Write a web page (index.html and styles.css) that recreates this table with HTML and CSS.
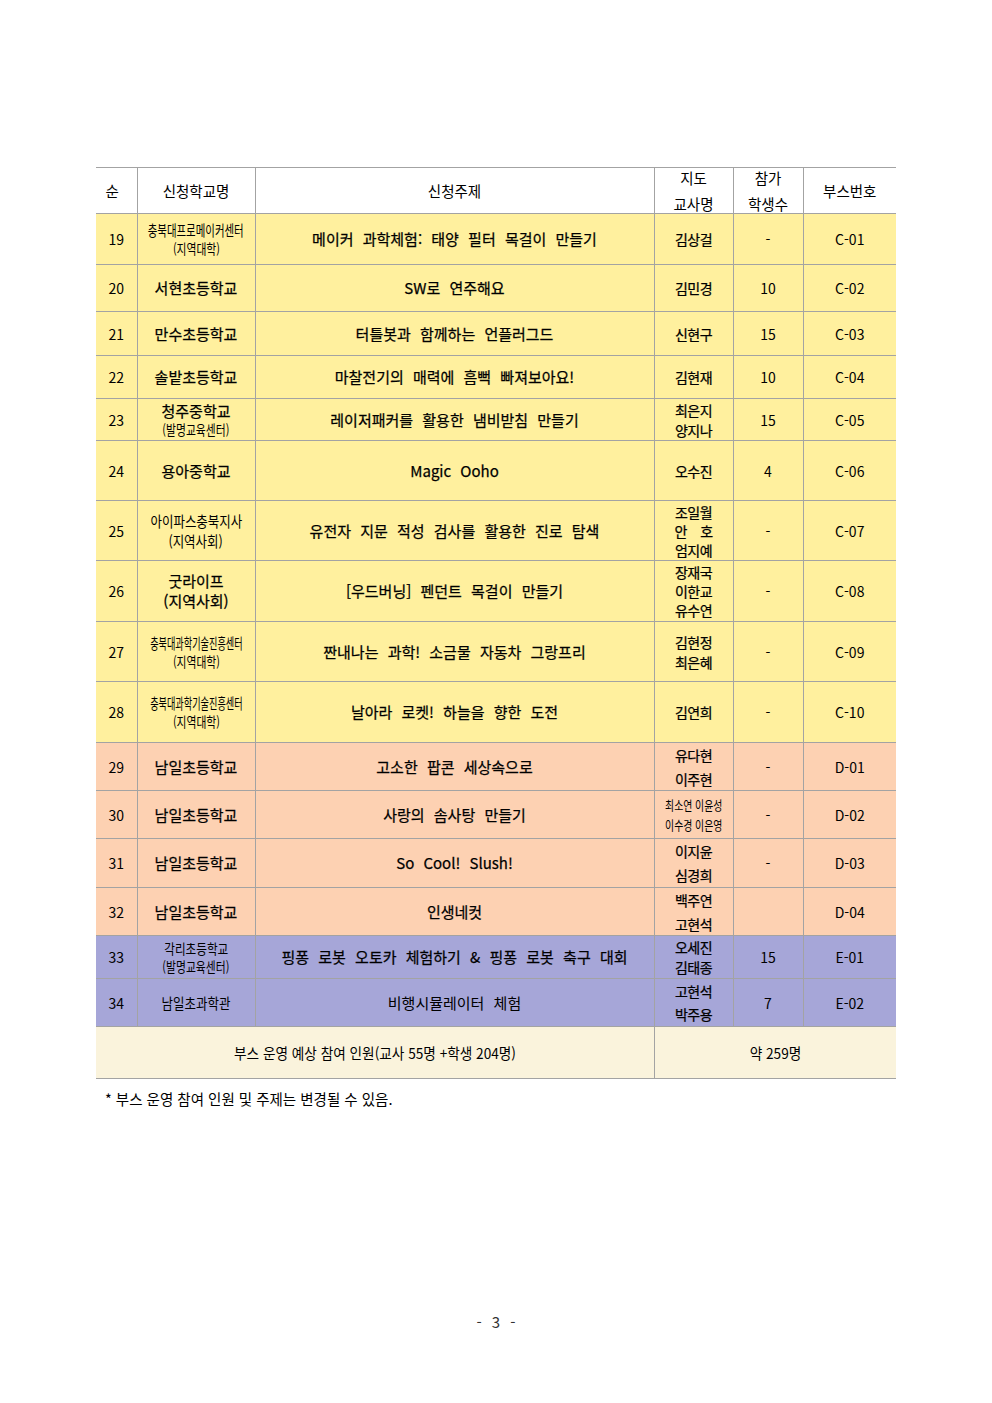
FILE: index.html
```html
<!DOCTYPE html>
<html lang="ko">
<head>
<meta charset="utf-8">
<title>부스 운영 목록</title>
<link rel="stylesheet" href="styles.css">
</head>
<body>
<div class="page">
  <table class="booths">
    <colgroup>
      <col class="c-no"><col class="c-school"><col class="c-topic"><col class="c-teacher"><col class="c-count"><col class="c-booth">
    </colgroup>
    <thead>
      <tr class="h46">
        <th class="first">순</th>
        <th>신청학교명</th>
        <th>신청주제</th>
        <th><div class="st g8"><span>지도</span><span>교사명</span></div></th>
        <th><div class="st g8"><span>참가</span><span>학생수</span></div></th>
        <th>부스번호</th>
      </tr>
    </thead>
    <tbody>
      <tr class="y h51">
        <td class="num">19</td>
        <td><div class="st"><span class="cond c70">충북대프로메이커센터</span><span class="cond c80 sm">(지역대학)</span></div></td>
        <td class="topic">메이커 과학체험: 태양 필터 목걸이 만들기</td>
        <td class="tch">김상걸</td>
        <td class="num">-</td>
        <td class="num">C-01</td>
      </tr>
      <tr class="y h47">
        <td class="num">20</td>
        <td class="sch">서현초등학교</td>
        <td class="topic">SW로 연주해요</td>
        <td class="tch">김민경</td>
        <td class="num">10</td>
        <td class="num">C-02</td>
      </tr>
      <tr class="y h44">
        <td class="num">21</td>
        <td class="sch">만수초등학교</td>
        <td class="topic">터틀봇과 함께하는 언플러그드</td>
        <td class="tch">신현구</td>
        <td class="num">15</td>
        <td class="num">C-03</td>
      </tr>
      <tr class="y h43">
        <td class="num">22</td>
        <td class="sch">솔밭초등학교</td>
        <td class="topic">마찰전기의 매력에 흠뻑 빠져보아요!</td>
        <td class="tch">김현재</td>
        <td class="num">10</td>
        <td class="num">C-04</td>
      </tr>
      <tr class="y h42">
        <td class="num">23</td>
        <td><div class="st"><span class="sch">청주중학교</span><span class="cond c80 sm">(발명교육센터)</span></div></td>
        <td class="topic">레이저패커를 활용한 냄비받침 만들기</td>
        <td class="tch"><div class="st g2"><span>최은지</span><span>양지나</span></div></td>
        <td class="num">15</td>
        <td class="num">C-05</td>
      </tr>
      <tr class="y h60">
        <td class="num">24</td>
        <td class="sch">용아중학교</td>
        <td class="topic">Magic Ooho</td>
        <td class="tch">오수진</td>
        <td class="num">4</td>
        <td class="num">C-06</td>
      </tr>
      <tr class="y h60">
        <td class="num">25</td>
        <td><div class="st g2"><span class="cond c86">아이파스충북지사</span><span class="cond c86">(지역사회)</span></div></td>
        <td class="topic">유전자 지문 적성 검사를 활용한 진로 탐색</td>
        <td class="tch"><div class="st g1"><span>조일월</span><span>안　호</span><span>엄지예</span></div></td>
        <td class="num">-</td>
        <td class="num">C-07</td>
      </tr>
      <tr class="y h61">
        <td class="num">26</td>
        <td class="sch"><div class="st g2"><span>굿라이프</span><span>(지역사회)</span></div></td>
        <td class="topic">[우드버닝] 펜던트 목걸이 만들기</td>
        <td class="tch"><div class="st g1"><span>장재국</span><span>이한교</span><span>유수연</span></div></td>
        <td class="num">-</td>
        <td class="num">C-08</td>
      </tr>
      <tr class="y h60">
        <td class="num">27</td>
        <td><div class="st"><span class="cond c63">충북대과학기술진흥센터</span><span class="cond c80 sm">(지역대학)</span></div></td>
        <td class="topic">짠내나는 과학! 소금물 자동차 그랑프리</td>
        <td class="tch"><div class="st g2"><span>김현정</span><span>최은혜</span></div></td>
        <td class="num">-</td>
        <td class="num">C-09</td>
      </tr>
      <tr class="y h61">
        <td class="num">28</td>
        <td><div class="st"><span class="cond c63">충북대과학기술진흥센터</span><span class="cond c80 sm">(지역대학)</span></div></td>
        <td class="topic">날아라 로켓! 하늘을 향한 도전</td>
        <td class="tch">김연희</td>
        <td class="num">-</td>
        <td class="num">C-10</td>
      </tr>
      <tr class="p h48">
        <td class="num">29</td>
        <td class="sch">남일초등학교</td>
        <td class="topic">고소한 팝콘 세상속으로</td>
        <td class="tch"><div class="st g6"><span>유다현</span><span>이주현</span></div></td>
        <td class="num">-</td>
        <td class="num">D-01</td>
      </tr>
      <tr class="p h48">
        <td class="num">30</td>
        <td class="sch">남일초등학교</td>
        <td class="topic">사랑의 솜사탕 만들기</td>
        <td><div class="st g2"><span class="cond c76 sm2">최소연 이윤성</span><span class="cond c76 sm2">이수경 이은영</span></div></td>
        <td class="num">-</td>
        <td class="num">D-02</td>
      </tr>
      <tr class="p h49">
        <td class="num">31</td>
        <td class="sch">남일초등학교</td>
        <td class="topic">So Cool! Slush!</td>
        <td class="tch"><div class="st g6"><span>이지윤</span><span>심경희</span></div></td>
        <td class="num">-</td>
        <td class="num">D-03</td>
      </tr>
      <tr class="p h48">
        <td class="num">32</td>
        <td class="sch">남일초등학교</td>
        <td class="topic">인생네컷</td>
        <td class="tch"><div class="st g6"><span>백주연</span><span>고현석</span></div></td>
        <td class="num"></td>
        <td class="num">D-04</td>
      </tr>
      <tr class="v h43">
        <td class="num">33</td>
        <td><div class="st"><span class="cond c86 sm">각리초등학교</span><span class="cond c80 sm">(발명교육센터)</span></div></td>
        <td class="topic">핑퐁 로봇 오토카 체험하기 &amp; 핑퐁 로봇 축구 대회</td>
        <td class="tch"><div class="st g2"><span>오세진</span><span>김태종</span></div></td>
        <td class="num">15</td>
        <td class="num">E-01</td>
      </tr>
      <tr class="v h48">
        <td class="num">34</td>
        <td><div class="st"><span class="cond c86">남일초과학관</span></div></td>
        <td class="topic light">비행시뮬레이터 체험</td>
        <td class="tch"><div class="st g5"><span>고현석</span><span>박주용</span></div></td>
        <td class="num">7</td>
        <td class="num">E-02</td>
      </tr>
      <tr class="t h52">
        <td colspan="3"><div class="st"><span class="cond c94">부스 운영 예상 참여 인원(교사 55명 +학생 204명)</span></div></td>
        <td colspan="3"><div class="st"><span class="cond c94">약 259명</span></div></td>
      </tr>
    </tbody>
  </table>
  <p class="note">* 부스 운영 참여 인원 및 주제는 변경될 수 있음.</p>
  <p class="pageno">- 3 -</p>
</div>
</body>
</html>
```

FILE: styles.css
```css
html, body {
  margin: 0;
  padding: 0;
  background: #ffffff;
}

body {
  font-family: "Noto Sans CJK KR", "Noto Sans", sans-serif;
  color: #000;
}

.page {
  width: 992px;
  height: 1403px;
  box-sizing: border-box;
  padding: 167px 0 0 96px;
}

.booths {
  width: 800px;
  border-collapse: collapse;
  table-layout: fixed;
  font-size: 14.5px;
  font-weight: 400;
}

.c-no { width: 41px; }
.c-school { width: 118px; }
.c-topic { width: 399px; }
.c-teacher { width: 79px; }
.c-count { width: 70px; }
.c-booth { width: 93px; }

.booths th,
.booths td {
  border: 1px solid #a3a3a3;
  padding: 0;
  text-align: center;
  vertical-align: middle;
  line-height: 18px;
}

.booths th:first-child,
.booths td:first-child {
  border-left: none;
}

.booths th:last-child,
.booths td:last-child {
  border-right: none;
}

.booths th {
  font-size: 14.5px;
  font-weight: 400;
}

.booths th.first {
  padding-right: 8px;
}

tr.y td { background: #fff09e; }
tr.p td { background: #fdd1b2; }
tr.v td { background: #a6a6d8; }
tr.t td { background: #faf3dc; }

.h42 { height: 42px; }
.h43 { height: 43px; }
.h44 { height: 44px; }
.h46 { height: 46px; }
.h47 { height: 47px; }
.h48 { height: 48px; }
.h49 { height: 49px; }
.h51 { height: 51px; }
.h52 { height: 52px; }
.h60 { height: 60px; }
.h61 { height: 61px; }

/* stacked multi-line cell content */
.st {
  display: flex;
  flex-direction: column;
  align-items: center;
  line-height: 18px;
}

.g1 { gap: 1px; }
.g2 { gap: 2px; }
.g5 { gap: 5px; }
.g6 { gap: 6px; }
.g8 { gap: 8px; }

.num {
  font-size: 14px;
}

/* medium-weight look for the data text */
.sch,
.topic,
.tch {
  font-weight: 400;
  -webkit-text-stroke: 0.25px #000;
}

.sch {
  font-size: 15px;
}

.topic {
  font-size: 15px;
  word-spacing: 5px;
}

.topic.light {
  -webkit-text-stroke: 0;
}

.tch {
  font-size: 14px;
  letter-spacing: -0.6px;
}

.cond {
  display: block;
  white-space: nowrap;
  transform-origin: center center;
}

.c63 { transform: scaleX(0.63); }
.c70 { transform: scaleX(0.72); }
.c76 { transform: scaleX(0.76); }
.c80 { transform: scaleX(0.8); }
.c86 { transform: scaleX(0.86); }
.c94 { transform: scaleX(0.94); }

.sm { font-size: 13.5px; }
.sm2 { font-size: 13px; }

.note {
  margin: 10px 0 0 0;
  padding-left: 9px;
  font-size: 14.5px;
  line-height: 20px;
}

.pageno {
  margin: 203px 0 0 0;
  width: 800px;
  text-align: center;
  font-size: 15px;
  line-height: 20px;
  color: #333;
  word-spacing: 6px;
}
```
